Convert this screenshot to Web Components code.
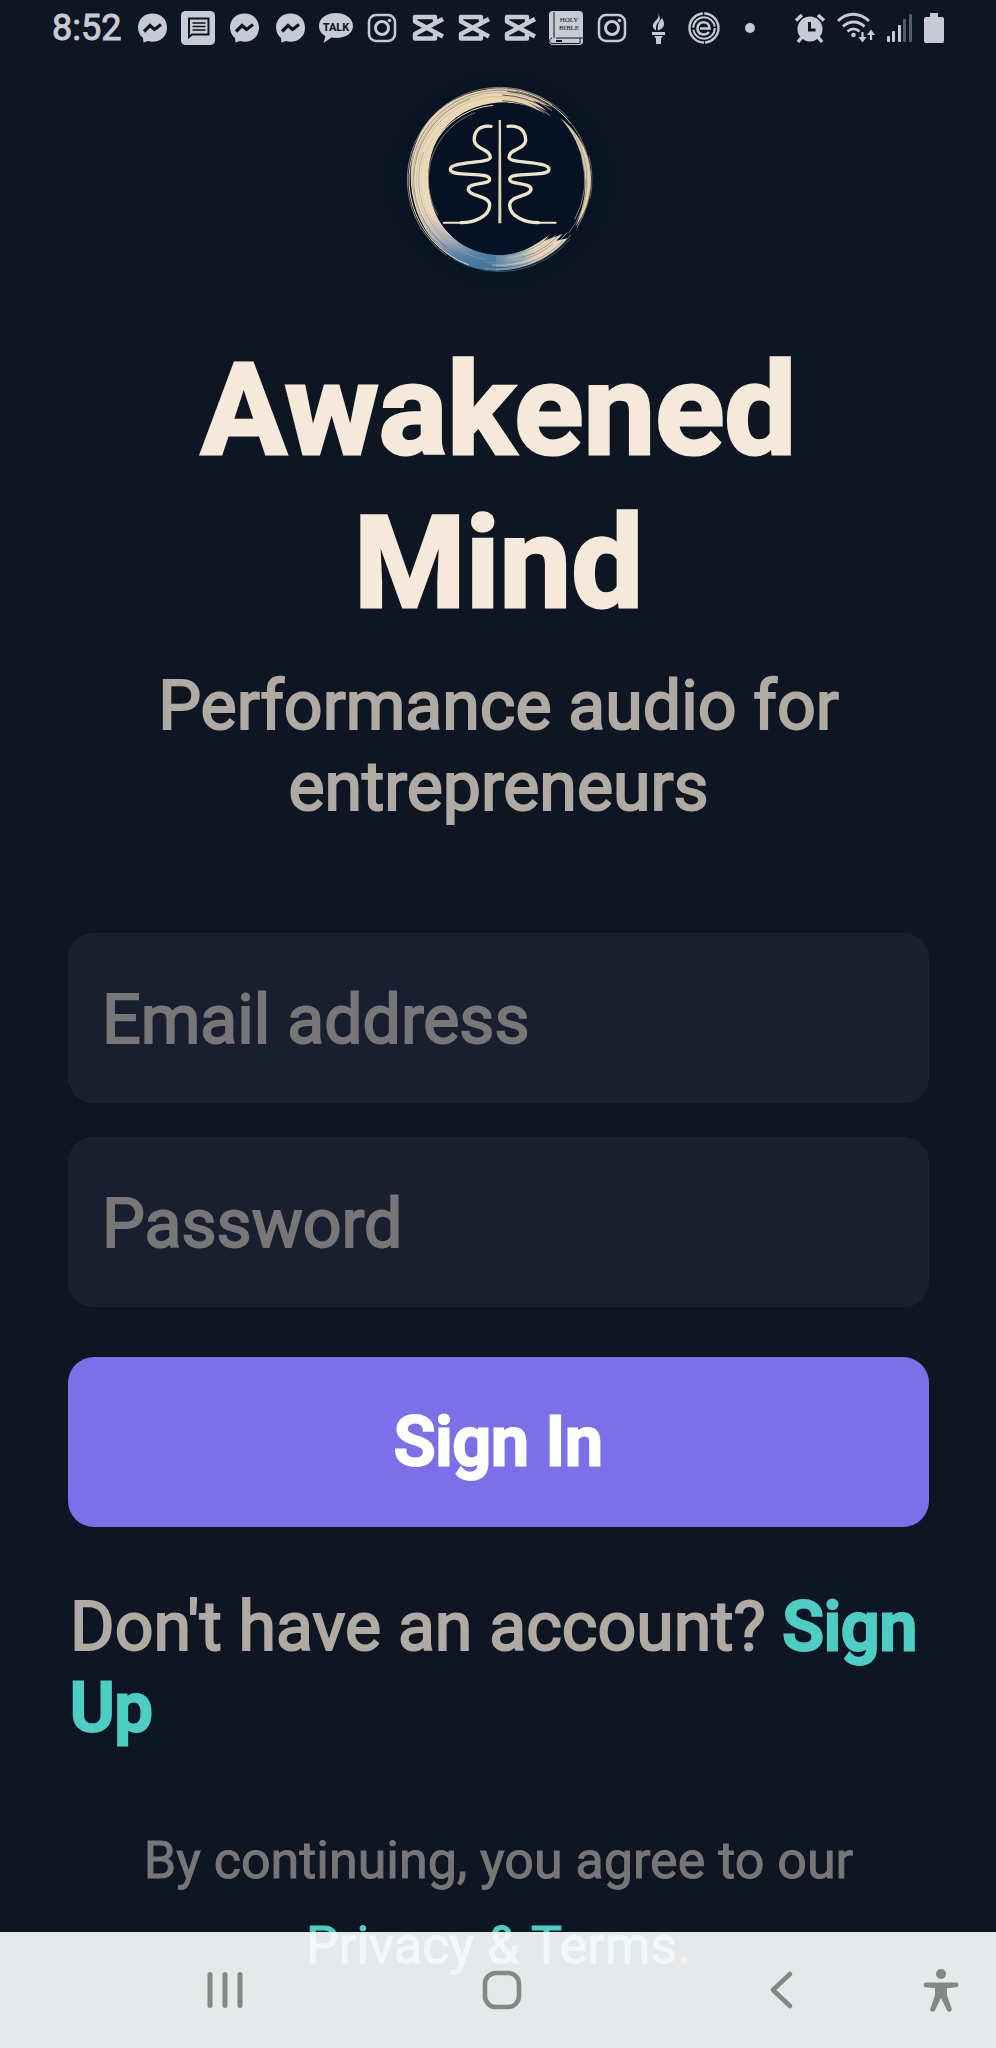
<!DOCTYPE html>
<html lang="en">
<head>
<meta charset="utf-8">
<meta name="viewport" content="width=device-width, initial-scale=1">
<title>Awakened Mind</title>
<style>
  html, body { margin: 0; min-height: 100%; background: #0d1622; }
  body { font-family: Roboto, "Liberation Sans", sans-serif; }
</style>
</head>
<body>
<login-page></login-page>

<script>
// Icons of the phone's status bar and navigation bar
const ICONS = {
  messenger: `<svg width="34" height="34" viewBox="0 0 34 34"><path fill="currentColor" d="M17.500 2.500C9 2.500 3 8.500 3 16.500c0 4.500 2 8 5 10.500l.5 4.500 4.500-1.500c1.500.5 3 .7 4.500.7C26 30.700 32 25 32 16.700S26 2.500 17.500 2.500z"/><path class="cut" d="M9 20.500l6-6 4.500 4 6.500-5" stroke-width="3.200"/></svg>`,
  message: `<svg width="34" height="34" viewBox="0 0 34 34"><rect width="34" height="34" rx="4.500" fill="currentColor"/><path class="cut" d="M8 26V7.500h19.500v16H11z" stroke-width="2"/><path class="cut" d="M11.500 12h13M11.500 15.500h13M11.500 19h13" stroke-width="1.500"/></svg>`,
  talk: `<svg width="36" height="34" viewBox="0 0 36 34"><path fill="currentColor" d="M18 2C8 2 1 7.500 1 15c0 4.500 2.500 8 6.500 10L5.500 32l8-5.500c1.500.3 3 .4 4.500.4 10 0 17-5 17-12S28 2 18 2z"/><text x="18" y="19.500" text-anchor="middle" font-size="11" font-weight="800" fill="#0c1621">TALK</text></svg>`,
  instagram: `<svg width="34" height="34" viewBox="0 0 34 34" fill="none" stroke="currentColor"><rect x="4" y="4" width="26" height="26" rx="7" stroke-width="2.500"/><circle cx="17" cy="17" r="6.500" stroke-width="3"/><circle cx="24.500" cy="9.500" r="1.800" fill="currentColor" stroke="none"/></svg>`,
  capcut: `<svg width="34" height="34" viewBox="0 0 34 34" fill="none" stroke="currentColor" stroke-width="4.400" stroke-linejoin="round"><path d="M24 10.500V6H4v4.500L32 25.500M24 23v4.500H4V23L32 8"/></svg>`,
  bible: `<svg width="36" height="34" viewBox="0 0 36 34"><rect x="1" width="34" height="34" rx="4" fill="currentColor"/><path d="M6 1v26M8 27h27M4 27c-3 1-3 5 0 5.500h28M32 27v5.500" fill="none" stroke="#0c1621" stroke-width="1"/><path d="M8 29h6v2H8z" fill="#0c1621"/><g font-family="Liberation Serif, serif" font-size="7" text-anchor="middle" fill="#0c1621"><text x="21" y="11">HOLY</text><text x="21" y="19">BIBLE</text></g></svg>`,
  torch: `<svg width="34" height="34" viewBox="0 0 34 34" fill="currentColor"><path d="M17 2c2 4-1 6-3 8.500-3 3.500-3 6.500 1 9 0-4 0-6 3-9 1.500-2.500 1-5-1-8.500zM21 7c-3 4-5 7-4 12.500 6-2 8-6.500 4-12.500z"/><path d="M11 21h13v3H11zM13 25h9l-2 2.500V33h-5v-5.500z"/></svg>`,
  coin: `<svg width="34" height="34" viewBox="0 0 34 34" fill="none" stroke="currentColor"><g transform="rotate(90 17 17)"><circle cx="17" cy="17" r="14.500" stroke-width="2.400" stroke-dasharray="44 1.500"/></g><circle cx="17" cy="17" r="10.800" stroke-width="2" stroke-dasharray="32 2"/><path d="M13 17.500h9.500C22.500 9 10.500 9.500 10.500 17c0 7.500 8.500 8 11.500 4" stroke-width="2.600"/></svg>`,
  dot: `<svg width="34" height="34" viewBox="0 0 34 34"><circle cx="17" cy="17" r="5" fill="currentColor"/></svg>`,
  alarm: `<svg width="32" height="34" viewBox="0 0 32 34"><circle cx="16" cy="18" r="12.500" fill="currentColor"/><path d="M2 9.500L8 4M24 4l6 5.500M8 26l-4 5M24 26l4 5" fill="none" stroke="currentColor" stroke-width="3.500"/><path class="cut" d="M15.500 11v8h6" stroke-width="3"/></svg>`,
  wifi: `<svg width="40" height="34" viewBox="0 0 40 34" fill="none" stroke="currentColor"><path d="M2 10c9-9 21-9 31 0M7 15.500c6.500-6 15-6 21.500 0M11.500 20.500c4-3.500 8-3.500 12 0" stroke-width="2.800"/><circle cx="17.500" cy="24" r="2.300" fill="currentColor" stroke="none"/><path d="M26.500 21v7M35 29v-7" stroke-width="2.200"/><path d="M22.500 26h8l-4 5.500zM31 24h8l-4-5.500z" fill="currentColor" stroke="none"/></svg>`,
  signal: `<svg width="28" height="34" viewBox="0 0 28 34" fill="currentColor"><rect x="1" y="25" width="3" height="6" rx="1"/><rect x="6" y="20" width="3" height="11" rx="1"/><rect x="12" y="14" width="3" height="17" rx="1"/><rect x="17" y="8" width="3" height="23" rx="1" opacity=".4"/><rect x="23" y="3" width="3" height="28" rx="1" opacity=".4"/></svg>`,
  battery: `<svg width="20" height="34" viewBox="0 0 20 34"><path fill="currentColor" d="M6 2h8v4h4q2 0 2 2v22q0 2-2 2H2q-2 0-2-2V8q0-2 2-2h4z"/></svg>`,
  recents: `<svg width="40" height="40" viewBox="0 0 40 40" fill="none" stroke="currentColor" stroke-width="5" stroke-linecap="round"><path d="M5 4.500v31M20 4.500v31M35 4.500v31"/></svg>`,
  home: `<svg width="40" height="40" viewBox="0 0 40 40" fill="none" stroke="currentColor"><rect x="3" y="3" width="34" height="34" rx="11" stroke-width="4.600"/></svg>`,
  back: `<svg width="40" height="40" viewBox="0 0 40 40" fill="none" stroke="currentColor" stroke-width="4.600" stroke-linecap="round" stroke-linejoin="round"><path d="M28 4L11 20l17 16"/></svg>`,
  access: `<svg width="40" height="46" viewBox="0 0 40 46" fill="currentColor"><circle cx="20" cy="7" r="5"/><path d="M5 15.500h30a2.400 2.400 0 0 1 0 4.800l-9 1v7l4.500 13a2.300 2.300 0 0 1-4.500 2L20 31l-6 12.300a2.300 2.300 0 0 1-4.500-2l4.500-13v-7l-9-1a2.400 2.400 0 0 1 0-4.800z"/></svg>`
};

class PhoneIcon extends HTMLElement {
  constructor() {
    super();
    this.attachShadow({ mode: "open" });
  }

  connectedCallback() {
    this.shadowRoot.innerHTML = `
      <style>
        :host { display: flex; flex: none; }
        svg { display: block; font-family: Roboto, sans-serif; }
        .cut { fill: none; stroke: #0c1621; }
      </style>
      ${ICONS[this.getAttribute("name")]}
    `;
  }
}
customElements.define("phone-icon", PhoneIcon);

class StatusBar extends HTMLElement {
  constructor() {
    super();
    this.attachShadow({ mode: "open" });
    const apps = ["messenger", "message", "messenger", "messenger", "talk", "instagram",
      "capcut", "capcut", "capcut", "bible", "instagram", "torch", "coin", "dot"];
    const system = ["alarm", "wifi", "signal", "battery"];
    const icons = (names) => names.map((n) => `<phone-icon name="${n}"></phone-icon>`).join("");

    this.shadowRoot.innerHTML = `
      <style>
        :host {
          display: flex;
          justify-content: space-between;
          align-items: center;
          height: 56px;
          padding: 0 52px;
          color: #c7cad3;
        }
        div { display: flex; align-items: center; }
        time { font-size: 36px; font-weight: 400; line-height: 60px; margin-right: 8px; -webkit-text-stroke: 1px; }
        .apps phone-icon { width: 46px; justify-content: center; }
        .system { gap: 10px; }
      </style>
      <div class="apps"><time>8:52</time>${icons(apps)}</div>
      <div class="system">${icons(system)}</div>
    `;
  }
}
customElements.define("status-bar", StatusBar);

// The brush ring is built from many thin arcs, so the edges look like dry bristles
class BrandLogo extends HTMLElement {
  constructor() {
    super();
    this.attachShadow({ mode: "open" });
    this.shadowRoot.innerHTML = `
      <style>
        :host { display: block; width: 240px; height: 220px; }
        svg { display: block; }
      </style>
      <svg width="240" height="220" viewBox="-6 0 720 660" role="img" aria-label="Awakened Mind logo">
        <defs>
          <radialGradient id="glow">
            <stop offset=".7" stop-color="#041223"/>
            <stop offset="1" stop-color="#041223" stop-opacity="0"/>
          </radialGradient>
          <linearGradient id="ink" gradientUnits="userSpaceOnUse" x1="300" y1="50" x2="340" y2="610">
            <stop offset="0" stop-color="#ead5b2"/>
            <stop offset=".65" stop-color="#eedcc0"/>
            <stop offset=".8" stop-color="#a9acb0"/>
            <stop offset=".9" stop-color="#4f7fa8"/>
            <stop offset="1" stop-color="#40709b"/>
          </linearGradient>
          <linearGradient id="tail" gradientUnits="userSpaceOnUse" x1="330" y1="580" x2="520" y2="520">
            <stop offset="0" stop-color="#4f7fa8"/>
            <stop offset=".45" stop-color="#a9b0b6"/>
            <stop offset=".7" stop-color="#ead5b8"/>
          </linearGradient>
        </defs>
        <ellipse cx="356" cy="330" rx="350" ry="330" fill="url(#glow)"/>
        <path fill="url(#ink)" d="M400 62C290 42 170 92 118 190C68 290 82 430 166 522C220 582 290 602 350 602L350 556C270 552 200 508 166 436C122 340 138 220 210 155C260 110 330 92 400 98Z"/>
        <path fill="url(#tail)" d="M345 556C410 556 450 535 505 495L490 512L545 492L526 512L560 505C510 565 430 600 345 602Z"/>
        <path fill="#ead5b2" d="M385 60C435 68 475 85 515 113L455 91L498 123L440 97L495 131C450 110 420 99 380 98Z"/>
        <path fill="#d8c7ae" d="M537 143C598 190 632 260 630 335C628 385 610 435 583 470C610 410 620 350 608 290C600 235 575 185 537 143Z"/>
        <g class="bristles" fill="none"></g>
        <g fill="none" stroke="#efe3c9" stroke-width="10" stroke-linecap="round">
          <path d="M330 169C290 165 278 190 280 212C284 240 328 236 328 262C326 282 208 272 208 298C210 324 326 302 326 328C326 346 262 336 262 358C264 380 328 376 326 406C324 440 280 458 240 458"/>
          <path d="M381 169C424 165 434 190 434 212C430 240 384 236 384 262C386 282 506 272 504 298C502 324 386 302 386 328C386 346 450 336 450 358C448 380 384 376 386 406C388 440 432 458 472 458"/>
          <path d="M188 458H242M470 458H524" stroke-width="6"/>
        </g>
        <path d="M353 150h7l1 310h-9z" fill="#e4d3b3"/>
      </svg>
    `;

    // [radius, start angle, end angle, colour, width]
    const strokes = [
      [277, 125, 318, "#cdbb9d", 2], [272, 110, 322, "#ead5b2", 3], [268, 150, 318, "#0a1725", 1],
      [262, 140, 300, "#b7a484", 2], [258, 128, 250, "#0a1725", 1], [250, 150, 290, "#c9b390", 2],
      [243, 100, 200, "#8da0ae", 2], [236, 115, 230, "#c9b390", 1], [224, 130, 265, "#ead5b2", 3],
      [214, 150, 250, "#b7a484", 2], [273, 323, 392, "#c6b59b", 2], [268, 338, 385, "#ead5b2", 3],
      [262, 328, 398, "#9b9080", 2], [255, 345, 388, "#c6b59b", 2], [277, 345, 372, "#8f887c", 2],
      [276, 40, 120, "#54799a", 2], [270, 38, 100, "#9aa5ac", 2], [264, 44, 92, "#0a1725", 1],
      [257, 38, 95, "#ead5b8", 2], [250, 50, 100, "#6c91b0", 2], [243, 35, 75, "#0a1725", 1],
      [236, 45, 85, "#c6bba9", 2], [228, 50, 110, "#5c86aa", 2],
      [274, 262, 305, "#e7d3b2", 2], [266, 275, 312, "#0a1725", 2], [260, 268, 307, "#cdbb9d", 2],
      [254, 272, 304, "#0a1725", 2], [245, 268, 308, "#d8c5a4", 2], [237, 272, 302, "#0a1725", 2]
    ];
    const group = this.shadowRoot.querySelector(".bristles");
    for (const [r, from, to, color, width] of strokes) {
      const point = (deg) => {
        const a = deg * Math.PI / 180;
        return `${(356 + r * Math.cos(a)).toFixed(1)} ${(329 + r * Math.sin(a)).toFixed(1)}`;
      };
      const arc = document.createElementNS("http://www.w3.org/2000/svg", "path");
      arc.setAttribute("d", `M${point(from)}A${r} ${r} 0 ${to - from > 180 ? 1 : 0} 1 ${point(to)}`);
      arc.setAttribute("stroke", color);
      arc.setAttribute("stroke-width", width);
      group.append(arc);
    }
  }
}
customElements.define("brand-logo", BrandLogo);

class TextField extends HTMLElement {
  constructor() {
    super();
    this.attachShadow({ mode: "open" });
  }

  connectedCallback() {
    const label = this.getAttribute("label");
    this.shadowRoot.innerHTML = `
      <style>
        :host { display: block; }
        input {
          display: block;
          box-sizing: border-box;
          width: 100%;
          height: 170px;
          padding: 4px 32px 0;
          border: 2px solid #1a2231;
          border-radius: 26px;
          background: #171f30;
          color: #f5e9da;
          font: 400 68px Roboto, sans-serif;
          -webkit-text-stroke: 2px;
          outline: none;
        }
        input::placeholder { color: #797676; opacity: 1; }
      </style>
      <input type="${this.getAttribute("type")}" aria-label="${label}" placeholder="${label}">
    `;
  }
}
customElements.define("text-field", TextField);

class PrimaryButton extends HTMLElement {
  constructor() {
    super();
    this.attachShadow({ mode: "open" });
    this.shadowRoot.innerHTML = `
      <style>
        :host { display: block; }
        button {
          display: block;
          width: 100%;
          height: 170px;
          padding: 0;
          border: 0;
          border-radius: 26px;
          background: #7c70e8;
          color: #fff;
          font: 500 68px Roboto, sans-serif;
          -webkit-text-stroke: 3px;
        }
      </style>
      <button type="button"><slot></slot></button>
    `;
  }
}
customElements.define("primary-button", PrimaryButton);

class NavBar extends HTMLElement {
  constructor() {
    super();
    this.attachShadow({ mode: "open" });
    this.shadowRoot.innerHTML = `
      <style>
        :host {
          display: grid;
          grid-template-columns: 1fr 120px 1fr;
          align-items: center;
          height: 116px;
          padding-left: 8px;
          background: rgba(255, 255, 255, .9);
        }
        button { display: flex; padding: 0; border: 0; background: none; color: #858686; }
        .recents { justify-self: center; }
        .home { justify-self: center; }
        .end { display: flex; justify-content: space-between; align-items: center; padding: 0 35px 0 200px; }
      </style>
      <button class="recents" aria-label="Recent apps"><phone-icon name="recents"></phone-icon></button>
      <button class="home" aria-label="Home"><phone-icon name="home"></phone-icon></button>
      <div class="end">
        <button aria-label="Back"><phone-icon name="back"></phone-icon></button>
        <button aria-label="Accessibility"><phone-icon name="access"></phone-icon></button>
      </div>
    `;
  }
}
customElements.define("nav-bar", NavBar);

class LoginPage extends HTMLElement {
  constructor() {
    super();
    this.attachShadow({ mode: "open" });
    this.shadowRoot.innerHTML = `
      <style>
        :host { display: block; min-height: 100vh; }
        main { display: flex; flex-direction: column; padding: 14px 67px 0 68px; }
        brand-logo { align-self: center; }
        h1, p { margin: 0; text-align: center; }
        h1 {
          margin-top: 44px;
          color: #f5e9da;
          font-size: 128px;
          font-weight: 700;
          line-height: 153px;
          -webkit-text-stroke: 3px;
        }
        p { font-weight: 400; -webkit-text-stroke: 2px; }
        .tagline { margin-top: 26px; padding: 0 60px; color: #b0aaa3; font-size: 68px; line-height: 81px; }
        form { display: flex; flex-direction: column; gap: 34px; margin-top: 105px; }
        primary-button { margin-top: 16px; }
        .signup { margin-top: 60px; padding: 0 2px; color: #b0aaa3; font-size: 68px; line-height: 81px; text-align: left; }
        a { color: #4ecdc4; text-decoration: none; }
        .signup a { font-weight: 500; -webkit-text-stroke: 3px; }
        .legal { margin-top: 69px; padding: 0 60px; color: #797676; font-size: 52px; line-height: 85px; -webkit-text-stroke: 1px; }
        nav-bar { position: fixed; left: 0; right: 0; bottom: 0; }
      </style>
      <status-bar></status-bar>
      <main>
        <brand-logo></brand-logo>
        <h1>Awakened Mind</h1>
        <p class="tagline">Performance audio for entrepreneurs</p>
        <form>
          <text-field type="email" label="Email address"></text-field>
          <text-field type="password" label="Password"></text-field>
          <primary-button>Sign In</primary-button>
        </form>
        <p class="signup">Don't have an account? <a href="#signup">Sign Up</a></p>
        <p class="legal">By continuing, you agree to our <a href="#terms">Privacy &amp; Terms</a>.</p>
      </main>
      <nav-bar></nav-bar>
    `;
  }
}
customElements.define("login-page", LoginPage);
</script>
</body>
</html>
